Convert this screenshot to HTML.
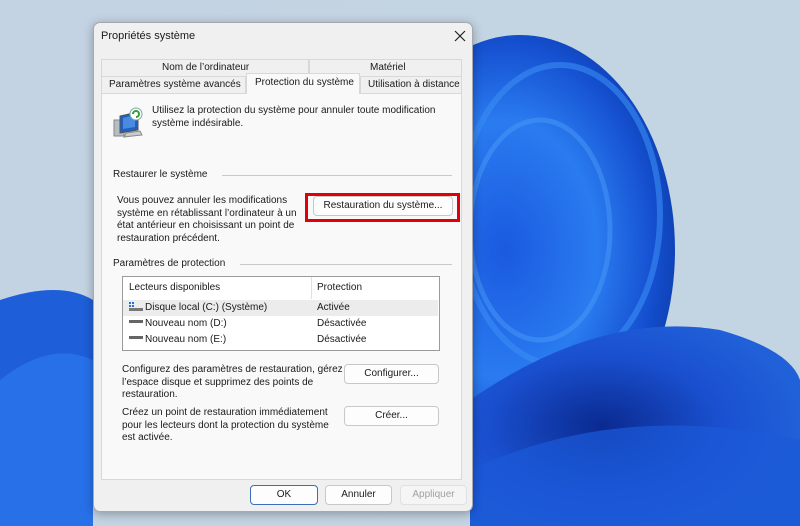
<!DOCTYPE html>
<html><head><meta charset="utf-8"><style>
*{margin:0;padding:0;box-sizing:border-box}
body{width:800px;height:526px;overflow:hidden;position:relative;font-family:"Liberation Sans",sans-serif;font-size:10px;color:#1a1a1a;background:#c5d6e6}
.a{position:absolute;white-space:nowrap}
.btn{position:absolute;border:1px solid #c8c8c8;border-radius:4px;background:#fdfdfd;text-align:center;line-height:18px}
.hr{position:absolute;height:1px;background:#c9c9c9}
</style></head><body>
<svg class="a" style="left:0;top:0" width="800" height="526">
<defs>
<radialGradient id="g1" cx="0.45" cy="0.5" r="0.6"><stop offset="0" stop-color="#1a5ae0"/><stop offset="0.5" stop-color="#2a7bf0"/><stop offset="0.8" stop-color="#1550d0"/><stop offset="1" stop-color="#0a3aa8"/></radialGradient>
<radialGradient id="g2" cx="0.4" cy="0.5" r="0.6"><stop offset="0" stop-color="#0a2a90"/><stop offset="0.6" stop-color="#1a50d0"/><stop offset="1" stop-color="#2060d8"/></radialGradient>
<linearGradient id="bg" x1="0" y1="0" x2="1" y2="0.3"><stop offset="0" stop-color="#c3d3e3"/><stop offset="1" stop-color="#c3d4e2"/></linearGradient>
</defs>
<rect width="800" height="526" fill="url(#bg)"/>
<ellipse cx="520" cy="250" rx="155" ry="215" fill="url(#g1)"/>
<ellipse cx="560" cy="215" rx="100" ry="150" fill="none" stroke="#3a8cf5" stroke-width="6" opacity=".6"/>
<ellipse cx="540" cy="230" rx="70" ry="110" fill="none" stroke="#4a9af8" stroke-width="5" opacity=".5"/>
<path d="M470 400 Q600 310 720 330 Q790 350 800 380 L800 526 L470 526Z" fill="url(#g2)"/>
<path d="M470 470 Q620 400 800 440 L800 526 L470 526Z" fill="#1b5ad8" opacity=".7"/>
<path d="M0 300 Q60 280 93 300 L93 526 L0 526Z" fill="#1e5ed8"/>
<path d="M0 380 Q50 340 93 360 L93 526 L0 526Z" fill="#2b78f0" opacity=".7"/>
</svg>
<div class="a" style="left:93px;top:22px;width:380px;height:490px;background:#f0f0f0;border:1px solid #a8a8b0;border-radius:7px;box-shadow:0 2px 10px rgba(0,0,0,.3)"></div>
<div class="a" style="left:101px;top:30px;font-size:11px">Propriétés système</div>
<svg class="a" style="left:454px;top:30px" width="12" height="12"><path d="M1 1L11 11M11 1L1 11" stroke="#222" stroke-width="1.2"/></svg>
<div class="a" style="left:101px;top:59px;width:208px;height:17px;border:1px solid #d8d8d8;border-bottom:none;background:#f0f0f0"></div>
<div class="a" style="left:309px;top:59px;width:153px;height:17px;border:1px solid #d8d8d8;border-bottom:none;background:#f0f0f0"></div>
<div class="a" style="left:162px;top:62px">Nom de l’ordinateur</div>
<div class="a" style="left:370px;top:62px">Matériel</div>
<div class="a" style="left:101px;top:76px;width:145px;height:17px;border:1px solid #d8d8d8;border-bottom:none;background:#f0f0f0"></div>
<div class="a" style="left:360px;top:76px;width:102px;height:17px;border:1px solid #d8d8d8;border-bottom:none;background:#f0f0f0"></div>
<div class="a" style="left:101px;top:93px;width:361px;height:387px;background:#f9f9f9;border:1px solid #d8d8d8"></div>
<div class="a" style="left:246px;top:73px;width:114px;height:21px;border:1px solid #d8d8d8;border-bottom:none;background:#f9f9f9"></div>
<div class="a" style="left:109px;top:79px">Paramètres système avancés</div>
<div class="a" style="left:255px;top:77px">Protection du système</div>
<div class="a" style="left:368px;top:79px">Utilisation à distance</div>
<svg class="a" style="left:112px;top:106px" width="34" height="32">
<rect x="2" y="14" width="10" height="16" fill="#b8bcc4" stroke="#888"/>
<path d="M8 10 L26 6 L26 24 L8 27Z" fill="#2060c0" stroke="#555"/>
<path d="M11 12 L23 9 L23 21 L11 23Z" fill="#4a8ae0"/>
<path d="M14 27 L28 25 L30 29 L12 31Z" fill="#ccc" stroke="#888"/>
<circle cx="24" cy="8" r="6" fill="#fff" stroke="#7aa" /><path d="M21 8 a3 3 0 1 1 3 3" fill="none" stroke="#3a9a3a" stroke-width="2"/>
</svg>
<div class="a" style="left:152px;top:105px">Utilisez la protection du système pour annuler toute modification</div>
<div class="a" style="left:152px;top:118px">système indésirable.</div>
<div class="a" style="left:113px;top:169px">Restaurer le système</div>
<div class="hr" style="left:222px;top:175px;width:230px"></div>
<div class="a" style="left:117px;top:195px;line-height:12.5px">Vous pouvez annuler les modifications<br>système en rétablissant l’ordinateur à un<br>état antérieur en choisissant un point de<br>restauration précédent.</div>
<div class="a" style="left:305px;top:193px;width:155px;height:29px;border:3px solid #e0000a"></div>
<div class="btn" style="left:313px;top:196px;width:140px;height:20px">Restauration du système...</div>
<div class="a" style="left:113px;top:258px">Paramètres de protection</div>
<div class="hr" style="left:240px;top:264px;width:212px"></div>
<div class="a" style="left:122px;top:276px;width:318px;height:75px;background:#fff;border:1px solid #9a9a9a"></div>
<div class="a" style="left:311px;top:277px;width:1px;height:22px;background:#e0e0e0"></div>
<div class="a" style="left:129px;top:282px">Lecteurs disponibles</div>
<div class="a" style="left:317px;top:282px">Protection</div>
<div class="a" style="left:123px;top:300px;width:315px;height:16px;background:#ececec"></div>
<svg class="a" style="left:128px;top:301px" width="15" height="11"><rect x="1" y="1" width="2" height="2" fill="#2a70d0"/><rect x="4" y="1" width="2" height="2" fill="#2a70d0"/><rect x="1" y="4" width="2" height="2" fill="#2a70d0"/><rect x="4" y="4" width="2" height="2" fill="#2a70d0"/><rect x="1" y="7" width="14" height="3" fill="#777"/></svg>
<div class="a" style="left:145px;top:302px">Disque local (C:) (Système)</div>
<div class="a" style="left:317px;top:302px">Activée</div>
<svg class="a" style="left:129px;top:319px" width="15" height="6"><rect y="1" width="14" height="3" fill="#666"/></svg>
<div class="a" style="left:145px;top:318px">Nouveau nom (D:)</div>
<div class="a" style="left:317px;top:318px">Désactivée</div>
<svg class="a" style="left:129px;top:335px" width="15" height="6"><rect y="1" width="14" height="3" fill="#666"/></svg>
<div class="a" style="left:145px;top:334px">Nouveau nom (E:)</div>
<div class="a" style="left:317px;top:334px">Désactivée</div>
<div class="a" style="left:122px;top:364px;line-height:12.5px">Configurez des paramètres de restauration, gérez<br>l’espace disque et supprimez des points de<br>restauration.</div>
<div class="btn" style="left:344px;top:364px;width:95px;height:20px">Configurer...</div>
<div class="a" style="left:122px;top:407px;line-height:12.5px">Créez un point de restauration immédiatement<br>pour les lecteurs dont la protection du système<br>est activée.</div>
<div class="btn" style="left:344px;top:406px;width:95px;height:20px">Créer...</div>
<div class="btn" style="left:250px;top:485px;width:68px;height:20px;border:1.5px solid #3a6fb8">OK</div>
<div class="btn" style="left:325px;top:485px;width:67px;height:20px">Annuler</div>
<div class="btn" style="left:400px;top:485px;width:67px;height:20px;color:#a0a0a0;border-color:#e0e0e0;background:#f5f5f5">Appliquer</div>
</body></html>
